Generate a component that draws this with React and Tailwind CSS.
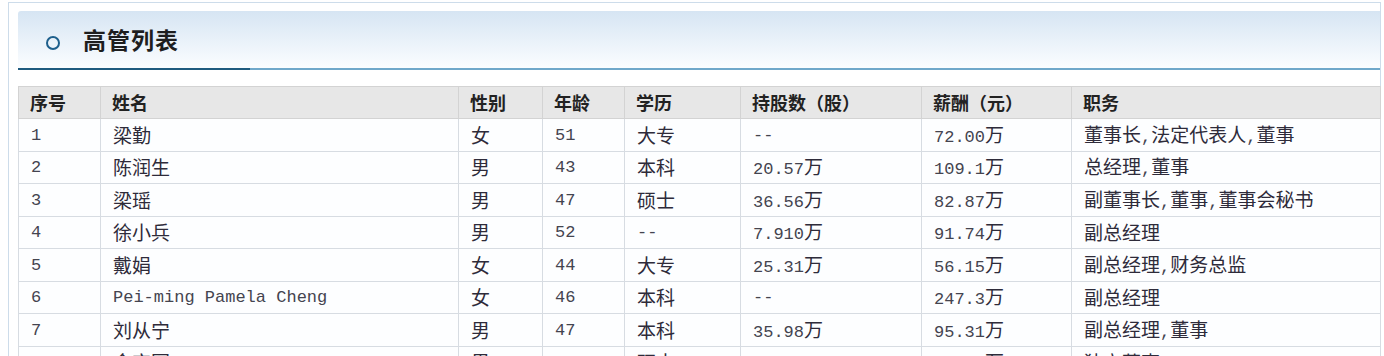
import React from 'react'

const cols = [
  { label: '序号', w: 'w-[82px]' },
  { label: '姓名', w: 'w-[358px]' },
  { label: '性别', w: 'w-[84px]' },
  { label: '年龄', w: 'w-[82px]' },
  { label: '学历', w: 'w-[116px]' },
  { label: '持股数（股）', w: 'w-[181px]' },
  { label: '薪酬（元）', w: 'w-[150px]' },
  { label: '职务', w: 'w-[309px]' },
]

const rows = [
  ['1', '梁勤', '女', '51', '大专', '--', '72.00万', '董事长,法定代表人,董事'],
  ['2', '陈润生', '男', '43', '本科', '20.57万', '109.1万', '总经理,董事'],
  ['3', '梁瑶', '男', '47', '硕士', '36.56万', '82.87万', '副董事长,董事,董事会秘书'],
  ['4', '徐小兵', '男', '52', '--', '7.910万', '91.74万', '副总经理'],
  ['5', '戴娟', '女', '44', '大专', '25.31万', '56.15万', '副总经理,财务总监'],
  ['6', 'Pei-ming Pamela Cheng', '女', '46', '本科', '--', '247.3万', '副总经理'],
  ['7', '刘从宁', '男', '47', '本科', '35.98万', '95.31万', '副总经理,董事'],
  ['8', '金宏图', '男', '58', '硕士', '--', '12.00万', '独立董事'],
]

// ascii runs in a mono face, chinese runs a bit larger
function Mixed({ text }) {
  const parts = text.split(/([\u4e00-\u9fff]+)/).filter(Boolean)
  return parts.map((p, i) =>
    /[\u4e00-\u9fff]/.test(p) ? (
      <span key={i} className="font-['Noto_Sans_CJK_SC',sans-serif] text-[19px]">{p}</span>
    ) : (
      <span key={i} className="font-['Liberation_Mono',monospace] text-[17px] text-[#44444f]">{p}</span>
    )
  )
}

export default function App() {
  return (
    <div className="w-[1384px] h-[356px] overflow-hidden bg-white">
      <div className="ml-[8px] mt-[2px] w-[1373px] h-[420px] border-l border-t border-r border-[#cddcea] pl-[9px] pt-[8px]">
        <div className="w-[1362px]">
          <div className="h-[57px] rounded-tl-[3px] bg-linear-to-b from-[#d6e5f3] to-[#fbfdff] flex items-center pl-[28px]">
            <div className="w-[14px] h-[14px] rounded-full border-2 border-[#1d5f8c] mt-[6px]"></div>
            <div className="ml-[23px] text-[23px] font-bold text-[#1e1e1e] font-['Noto_Sans_CJK_SC',sans-serif] tracking-[1px]">
              高管列表
            </div>
          </div>
          <div className="flex">
            <div className="w-[232px] h-[2px] bg-[#1f5b7f]"></div>
            <div className="flex-1 h-[2px] bg-[#70a8ca]"></div>
          </div>

          <table className="mt-[16px] w-[1362px] table-fixed border-collapse">
            <thead>
              <tr className="h-[32px] bg-[#e7e7e7]">
                {cols.map((c) => (
                  <th
                    key={c.label}
                    className={`${c.w} border border-[#d3d3d3] text-left pl-[11px] font-bold text-[18px] text-[#222222] font-['Noto_Sans_CJK_SC',sans-serif] whitespace-nowrap`}
                  >
                    {c.label}
                  </th>
                ))}
              </tr>
            </thead>
            <tbody>
              {rows.map((r) => (
                <tr key={r[0]} className="h-[32.5px] bg-[#fdfeff]">
                  {r.map((v, i) => (
                    <td
                      key={i}
                      className="border border-[#d7dce2] pl-[12px] text-[#2e2b3a] leading-none whitespace-nowrap"
                    >
                      <Mixed text={v} />
                    </td>
                  ))}
                </tr>
              ))}
            </tbody>
          </table>
        </div>
      </div>
    </div>
  )
}
